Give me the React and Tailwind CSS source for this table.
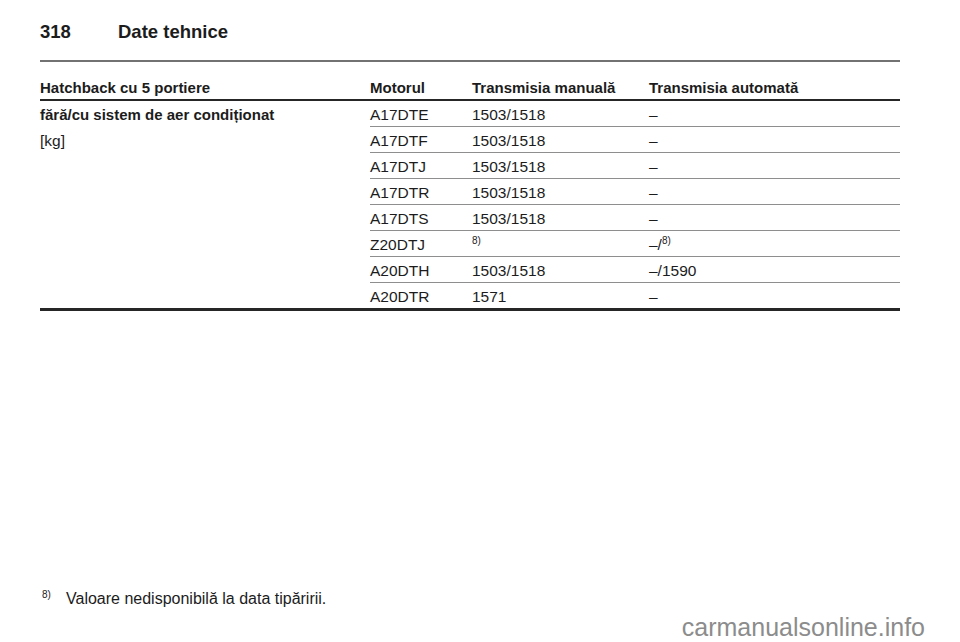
import React from "react";

const rows = [
  { motor: "A17DTE", manual: "1503/1518", auto: "–" },
  { motor: "A17DTF", manual: "1503/1518", auto: "–" },
  { motor: "A17DTJ", manual: "1503/1518", auto: "–" },
  { motor: "A17DTR", manual: "1503/1518", auto: "–" },
  { motor: "A17DTS", manual: "1503/1518", auto: "–" },
  { motor: "Z20DTJ", manual: null, auto: null, note: true },
  { motor: "A20DTH", manual: "1503/1518", auto: "–/1590" },
  { motor: "A20DTR", manual: "1571", auto: "–" },
];

const Sup = ({ children }) => (
  <span className="relative top-[-6px] text-[10px] leading-none">{children}</span>
);

const App = () => {
  return (
    <div className="flex h-[642px] w-[960px] flex-col bg-white font-['Liberation_Sans',Arial,sans-serif] text-[#1c1c1c]">
      {/* page heading */}
      <div className="ml-[40px] flex w-[860px] pt-[21px] text-[18.5px] font-bold leading-[22px]">
        <span className="w-[78px]">318</span>
        <span>Date tehnice</span>
      </div>
      <div className="ml-[40px] mt-[17px] h-[1.5px] w-[860px] bg-[#727272]" />

      {/* table */}
      <div className="ml-[40px] mt-[17.5px] w-[860px]">
        <div className="flex border-b-[2.5px] border-[#262626] pb-[2px] text-[15px] font-bold leading-[18px]">
          <div className="w-[330px] shrink-0">Hatchback cu 5 portiere</div>
          <div className="w-[102px] shrink-0">Motorul</div>
          <div className="w-[177px] shrink-0">Transmisia manuală</div>
          <div>Transmisia automată</div>
        </div>
        <div className="flex border-b-[3px] border-[#262626]">
          <div className="w-[330px] shrink-0">
            <div className="h-[26px] pt-[1.5px] text-[15px] font-bold leading-[23px]">
              fără/cu sistem de aer condiționat
            </div>
            <div className="h-[26px] pt-[1.5px] text-[15.5px] leading-[23px]">[kg]</div>
          </div>
          <div className="flex-1">
            {rows.map((r, i) => (
              <div
                key={r.motor}
                className={
                  i === rows.length - 1
                    ? "flex h-[25px] pt-[1.5px] text-[15.5px] leading-[23px]"
                    : "flex h-[26px] border-b border-[#8e8e8e] pt-[1.5px] text-[15.5px] leading-[23px]"
                }
              >
                <div className="w-[102px] shrink-0">{r.motor}</div>
                <div className="w-[177px] shrink-0">
                  {r.note ? <Sup>8)</Sup> : r.manual}
                </div>
                <div>
                  {r.note ? (
                    <>
                      –/<Sup>8)</Sup>
                    </>
                  ) : (
                    r.auto
                  )}
                </div>
              </div>
            ))}
          </div>
        </div>
      </div>

      {/* footnote */}
      <div className="ml-[40px] mt-auto flex w-[860px] text-[16px] leading-[20px]">
        <span className="w-[26px] shrink-0 pl-[2px]">
          <Sup>8)</Sup>
        </span>
        <span>Valoare nedisponibilă la data tipăririi.</span>
      </div>
      <div className="mt-[3px] h-[30px] pr-[35px] text-right text-[25px] leading-[30px] text-[#8c8c8c]">
        carmanualsonline.info
      </div>
    </div>
  );
};

export default App;
